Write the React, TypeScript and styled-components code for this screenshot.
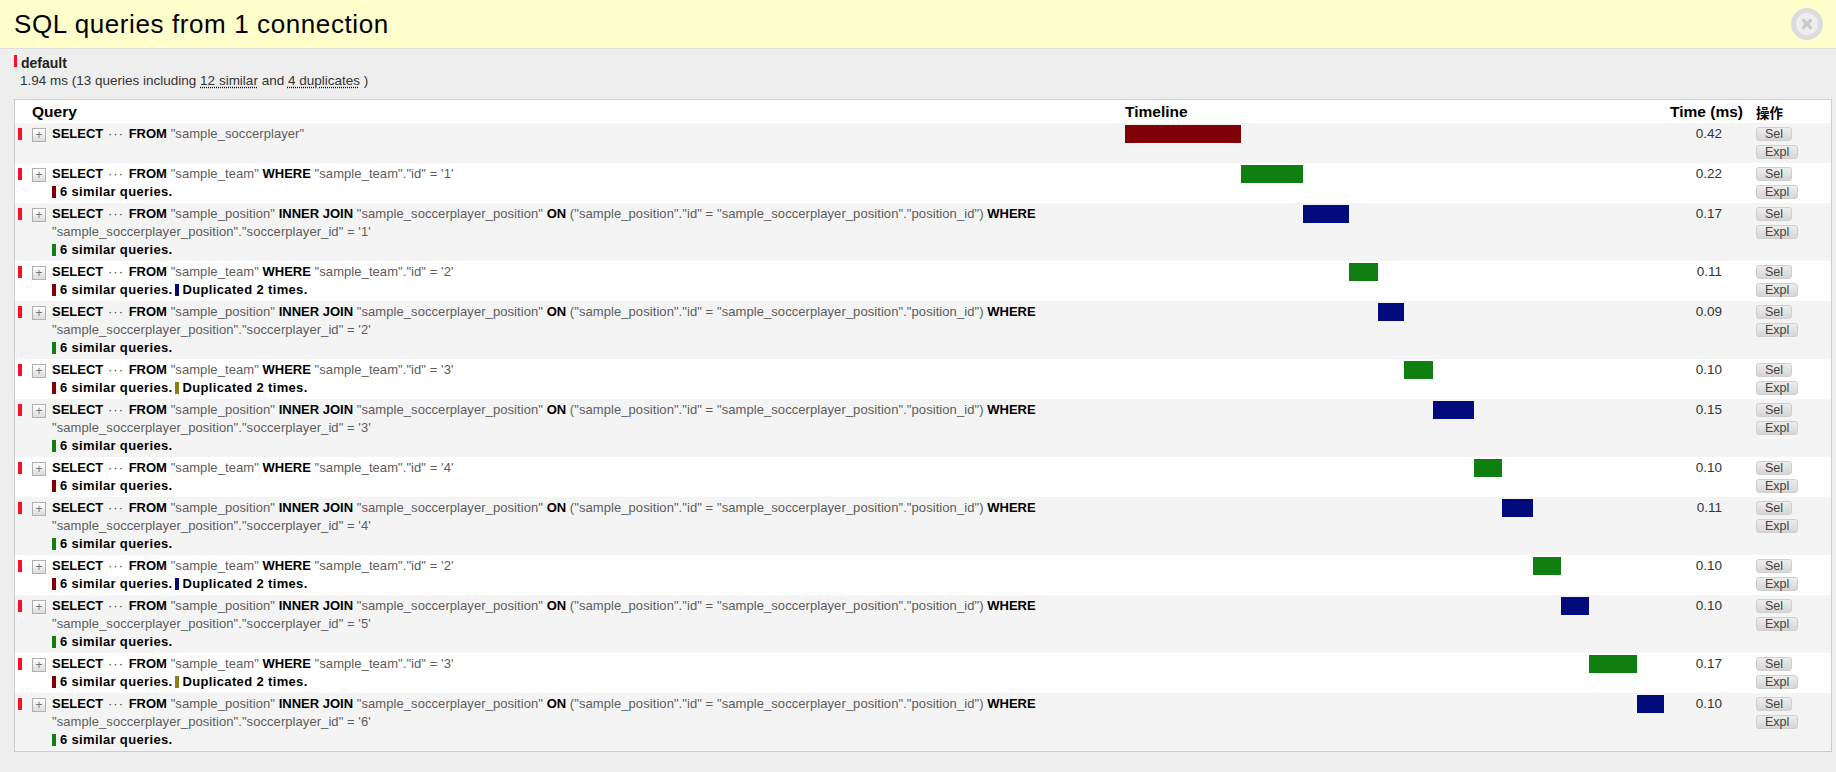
import React from "react";
import styled, { createGlobalStyle } from "styled-components";

const Global = createGlobalStyle`
  html, body { margin: 0; padding: 0; background: #eeeeee; }
  body { font-family: "Liberation Sans", "Noto Sans CJK JP", sans-serif; color: #000; }
`;

const Page = styled.div`
  width: 1836px;
  height: 772px;
  overflow: hidden;
  background: #eeeeee;
`;

const Header = styled.header`
  height: 48px;
  box-sizing: content-box;
  background: #ffffcc;
  border-bottom: 1px solid #dddddd;
  display: flex;
  align-items: center;
  justify-content: space-between;
  padding: 0 13px 0 14px;
`;

const Title = styled.h1`
  margin: 0;
  font-size: 26px;
  font-weight: 400;
  letter-spacing: 0.6px;
  color: #000;
`;

const CloseButton = styled.button`
  width: 32px;
  height: 32px;
  padding: 0;
  border: 0;
  background: none;
  display: block;
`;

const Content = styled.main`
  padding: 5px 4px 0 14px;
`;

const ConnectionName = styled.div`
  height: 18px;
  display: flex;
  align-items: center;
  font-size: 14px;
  font-weight: 700;
  line-height: 18px;
  color: #222;
`;

const ConnectionMark = styled.span`
  width: 3px;
  height: 12px;
  background: #ff0d26;
  margin-right: 4px;
  position: relative;
  top: -2px;
`;

const Summary = styled.div`
  font-size: 13.5px;
  line-height: 18px;
  color: #333;
  padding-left: 6px;
  margin-bottom: 9px;
`;

const Dotted = styled.span`
  text-decoration: underline dotted #000;
  text-underline-offset: 2px;
`;

const Table = styled.table`
  width: 1818px;
  table-layout: fixed;
  border-collapse: separate;
  border-spacing: 0;
  background: #fff;
  border: 1px solid #cccccc;
  box-sizing: border-box;
`;

const HeadCell = styled.th<{ $pad?: number; $size?: number }>`
  height: 23px;
  padding: 0 0 0 ${(p) => p.$pad ?? 0}px;
  text-align: left;
  font-size: ${(p) => p.$size ?? 15.5}px;
  font-weight: 700;
  color: #000;
  white-space: nowrap;
`;

const Row = styled.tr<{ $odd: boolean }>`
  background: ${(p) => (p.$odd ? "#f4f4f4" : "#ffffff")};
`;

const Cell = styled.td`
  padding: 2px 0;
  vertical-align: top;
  font-size: 13px;
  line-height: 18px;
  color: #555;
`;

const MarkCell = styled(Cell)`
  padding-left: 3px;
`;

const Mark = styled.span`
  display: block;
  width: 4px;
  height: 12px;
  margin-top: 3px;
  background: #ff0d26;
`;

const Toggle = styled.button`
  display: block;
  width: 14px;
  height: 14px;
  margin-top: 3px;
  padding: 0;
  box-sizing: border-box;
  border: 1px solid #b0b0b0;
  background: linear-gradient(#ffffff, #dcdcdc);
  color: #777;
  font: 400 12px/12px "Liberation Sans", sans-serif;
  text-align: center;
`;

const Sql = styled.div`
  color: #5c5c5c;
  letter-spacing: 0.07px;
`;

const Keyword = styled.strong`
  font-weight: 700;
  color: #000;
  letter-spacing: 0;
`;

const Dots = styled.span`
  letter-spacing: 1px;
  color: #444;
  margin: 0 1px;
`;

const Notes = styled.div`
  display: flex;
  align-items: center;
  height: 18px;
  font-weight: 700;
  color: #000;
  letter-spacing: 0.35px;
`;

const Note = styled.span`
  display: flex;
  align-items: center;
  margin-right: 2px;
`;

const Swatch = styled.span<{ $color: string }>`
  width: 4px;
  height: 12px;
  margin-right: 4px;
  background: ${(p) => p.$color};
`;

const Bar = styled.div<{ $color: string }>`
  height: 18px;
  background: ${(p) => p.$color};
`;

const TimeCell = styled(Cell)`
  text-align: right;
  padding-right: 31px;
  font-size: 13.5px;
  color: #333;
`;

const ActionCell = styled(Cell)`
  padding-left: 3px;
`;

const ActionButton = styled.button`
  display: block;
  height: 14px;
  margin: 2px 0;
  padding: 0 8px;
  box-sizing: border-box;
  border: 1px solid #cfcfcf;
  border-radius: 3px;
  background: linear-gradient(#ededed, #d6d6d6);
  color: #444;
  font: 400 12.5px/12px "Liberation Sans", sans-serif;

  & + & {
    margin-top: 4px;
  }
`;

const DARKRED = "#800008";
const GREEN = "#107f12";
const NAVY = "#020b7c";
const OLIVE = "#8a7f12";

type Q = {
  kind: "all" | "team" | "pos";
  id?: number;
  time: string;
  width: number;
  bar: string;
  similar?: string;
  dup?: string;
};

const queries: Q[] = [
  { kind: "all", time: "0.42", width: 116, bar: DARKRED },
  { kind: "team", id: 1, time: "0.22", width: 62, bar: GREEN, similar: DARKRED },
  { kind: "pos", id: 1, time: "0.17", width: 46, bar: NAVY, similar: GREEN },
  { kind: "team", id: 2, time: "0.11", width: 29, bar: GREEN, similar: DARKRED, dup: NAVY },
  { kind: "pos", id: 2, time: "0.09", width: 26, bar: NAVY, similar: GREEN },
  { kind: "team", id: 3, time: "0.10", width: 29, bar: GREEN, similar: DARKRED, dup: OLIVE },
  { kind: "pos", id: 3, time: "0.15", width: 41, bar: NAVY, similar: GREEN },
  { kind: "team", id: 4, time: "0.10", width: 28, bar: GREEN, similar: DARKRED },
  { kind: "pos", id: 4, time: "0.11", width: 31, bar: NAVY, similar: GREEN },
  { kind: "team", id: 2, time: "0.10", width: 28, bar: GREEN, similar: DARKRED, dup: NAVY },
  { kind: "pos", id: 5, time: "0.10", width: 28, bar: NAVY, similar: GREEN },
  { kind: "team", id: 3, time: "0.17", width: 48, bar: GREEN, similar: DARKRED, dup: OLIVE },
  { kind: "pos", id: 6, time: "0.10", width: 27, bar: NAVY, similar: GREEN },
];

function SqlText({ q }: { q: Q }) {
  const head = (
    <>
      <Keyword>SELECT</Keyword> <Dots>···</Dots> <Keyword>FROM</Keyword>{" "}
    </>
  );
  if (q.kind === "all") {
    return <Sql>{head}"sample_soccerplayer"</Sql>;
  }
  if (q.kind === "team") {
    return (
      <Sql>
        {head}"sample_team" <Keyword>WHERE</Keyword> "sample_team"."id" = '{q.id}'
      </Sql>
    );
  }
  return (
    <Sql>
      {head}"sample_position" <Keyword>INNER JOIN</Keyword> "sample_soccerplayer_position" <Keyword>ON</Keyword>{" "}
      ("sample_position"."id" = "sample_soccerplayer_position"."position_id") <Keyword>WHERE</Keyword>{" "}
      "sample_soccerplayer_position"."soccerplayer_id" = '{q.id}'
    </Sql>
  );
}

export default function App() {
  let offset = 0;
  return (
    <Page>
      <Global />
      <Header>
        <Title>SQL queries from 1 connection</Title>
        <CloseButton aria-label="close">
          <svg width="32" height="32" viewBox="0 0 32 32">
            <circle cx="16" cy="16" r="13.5" fill="#eeeeee" stroke="#dcdcdc" strokeWidth="5" />
            <path d="M12.5 12.5 L19.5 19.5 M19.5 12.5 L12.5 19.5" stroke="#c8c8c8" strokeWidth="3.2" strokeLinecap="round" />
          </svg>
        </CloseButton>
      </Header>
      <Content>
        <ConnectionName>
          <ConnectionMark />
          default
        </ConnectionName>
        <Summary>
          1.94 ms (13 queries including <Dotted>12 similar</Dotted> and <Dotted>4 duplicates</Dotted> )
        </Summary>
        <Table>
          <colgroup>
            <col style={{ width: 17 }} />
            <col style={{ width: 20 }} />
            <col style={{ width: 1073 }} />
            <col style={{ width: 539 }} />
            <col style={{ width: 89 }} />
            <col />
          </colgroup>
          <thead>
            <tr>
              <HeadCell colSpan={3} $pad={17}>Query</HeadCell>
              <HeadCell>Timeline</HeadCell>
              <HeadCell $pad={6}>Time (ms)</HeadCell>
              <HeadCell $pad={3} $size={13.5}>操作</HeadCell>
            </tr>
          </thead>
          <tbody>
            {queries.map((q, i) => {
              const left = offset;
              offset += q.width;
              return (
                <Row key={i} $odd={i % 2 === 0}>
                  <MarkCell><Mark /></MarkCell>
                  <Cell><Toggle>+</Toggle></Cell>
                  <Cell>
                    <SqlText q={q} />
                    {q.similar && (
                      <Notes>
                        <Note><Swatch $color={q.similar} />6 similar queries.</Note>
                        {q.dup && <Note><Swatch $color={q.dup} />Duplicated 2 times.</Note>}
                      </Notes>
                    )}
                  </Cell>
                  <Cell>
                    <Bar $color={q.bar} style={{ width: q.width, marginLeft: left }} />
                  </Cell>
                  <TimeCell>{q.time}</TimeCell>
                  <ActionCell>
                    <ActionButton>Sel</ActionButton>
                    <ActionButton>Expl</ActionButton>
                  </ActionCell>
                </Row>
              );
            })}
          </tbody>
        </Table>
      </Content>
    </Page>
  );
}
